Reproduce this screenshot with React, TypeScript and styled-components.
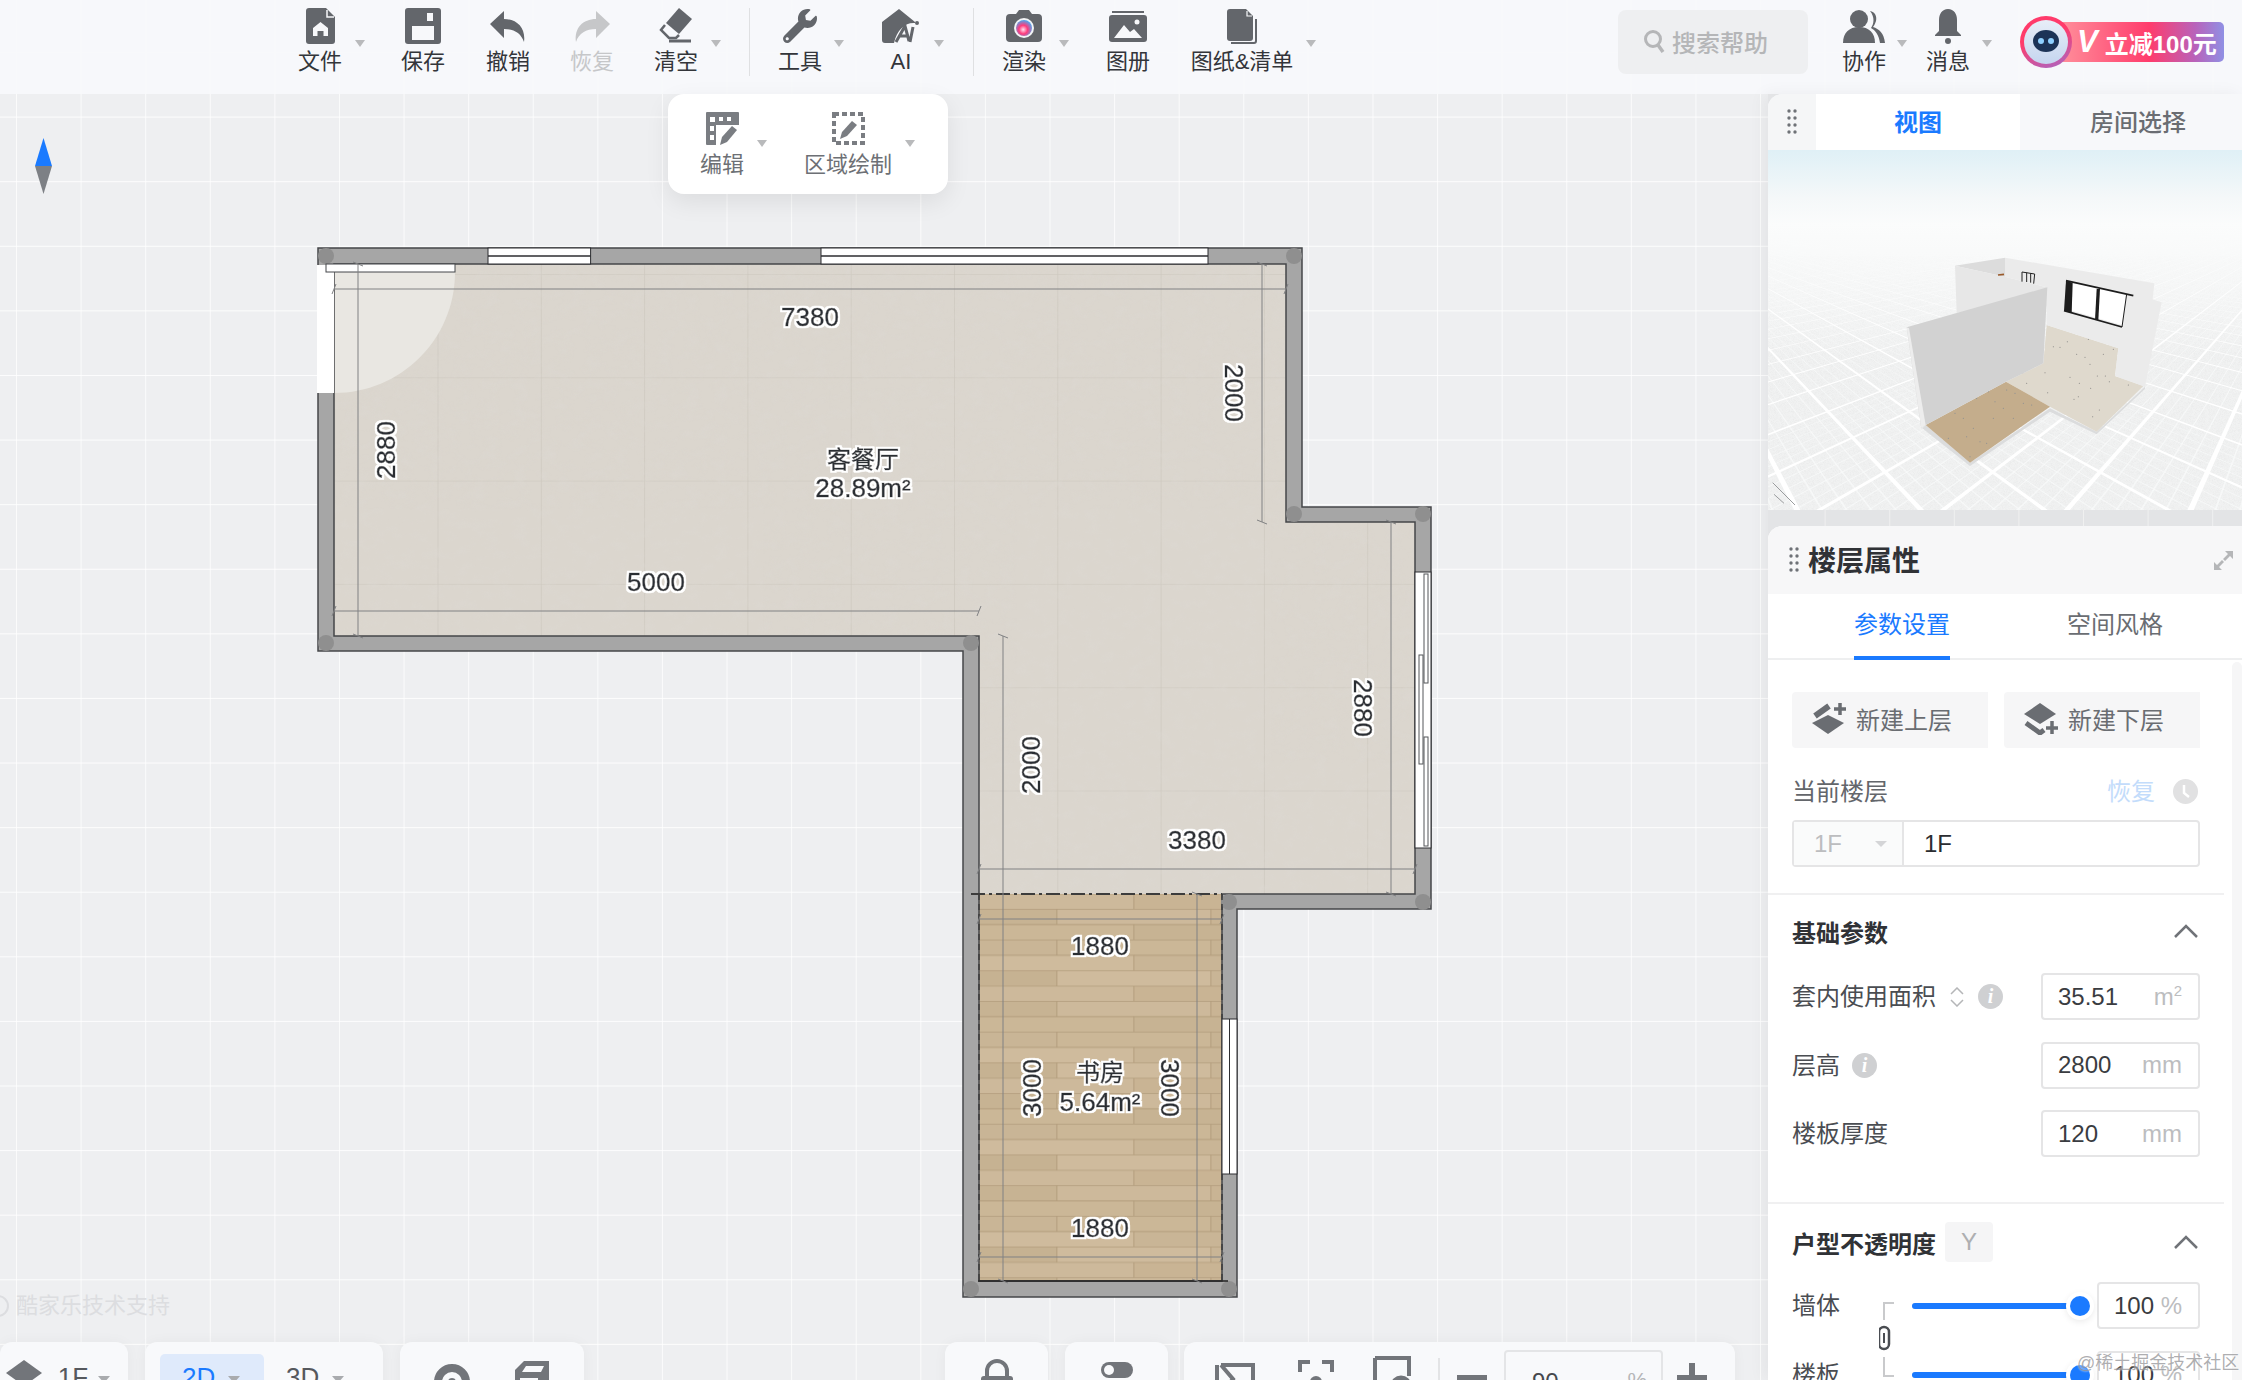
import React from "react";
import styled, { createGlobalStyle } from "styled-components";
import { FaWrench } from "react-icons/fa";

const GlobalStyle = createGlobalStyle`
  html, body { margin: 0; padding: 0; background: #eeeff1; }
  body { font-family: "Liberation Sans", "Noto Sans CJK SC", sans-serif; }
  * { box-sizing: border-box; }
`;

const Page = styled.div`
  position: relative;
  width: 2242px;
  height: 1380px;
  overflow: hidden;
  display: flex;
  flex-direction: column;
  background-color: #eeeff1;
  background-image:
    linear-gradient(to right, rgba(255, 255, 255, 0.75) 1px, transparent 1px),
    linear-gradient(to bottom, rgba(255, 255, 255, 0.85) 1px, transparent 1px);
  background-size: 64.6px 64.6px;
  background-position: 16px 52px;
`;

/* ---------- top toolbar ---------- */

const TopBar = styled.header`
  height: 94px;
  flex: none;
  display: flex;
  padding: 0 18px 0 270px;
  background: rgba(248, 249, 251, 0.94);
`;

const ToolItem = styled.div<{ $w: number; $ml?: number; $off?: boolean }>`
  position: relative;
  width: ${(p) => p.$w}px;
  margin-left: ${(p) => p.$ml ?? 0}px;
  flex: none;
  display: flex;
  flex-direction: column;
  align-items: center;
  padding-top: 6px;
  color: ${(p) => (p.$off ? "#c6c7c9" : "#63666b")};
`;

const ToolIcon = styled.div`
  height: 40px;
  display: flex;
  align-items: center;
  justify-content: center;
`;

const ToolLabel = styled.div<{ $off?: boolean }>`
  margin-top: 4px;
  font-size: 22px;
  line-height: 24px;
  white-space: nowrap;
  color: ${(p) => (p.$off ? "#c6c7c9" : "#33353a")};
`;

const Caret = styled.i<{ $dx: number; $y?: number }>`
  position: absolute;
  top: ${(p) => p.$y ?? 40}px;
  left: calc(50% + ${(p) => p.$dx - 5}px);
  border-style: solid;
  border-width: 7px 5px 0;
  border-color: #b9babc transparent transparent;
`;

const ToolSep = styled.div<{ $ml: number }>`
  width: 1px;
  flex: none;
  height: 68px;
  margin: 8px 0 0 ${(p) => p.$ml}px;
  background: #dfe0e2;
`;

const SearchBox = styled.div`
  width: 190px;
  height: 64px;
  margin: 10px 0 0 auto;
  flex: none;
  display: flex;
  align-items: center;
  gap: 7px;
  padding: 0 0 2px 25px;
  border-radius: 8px;
  background: #eeeff1;
  color: #b5b6b8;
  font-size: 24px;
  font-weight: 500;
`;

const Promo = styled.div`
  display: flex;
  align-items: center;
  height: 52px;
  margin: 16px 0 0 30px;
  flex: none;
`;

const Avatar = styled.div`
  position: relative;
  z-index: 1;
  width: 52px;
  height: 52px;
  border-radius: 50%;
  padding: 4px;
  background: linear-gradient(160deg, #ff3b6b 40%, #a569c8);
`;

const AvatarFace = styled.div`
  width: 44px;
  height: 44px;
  border-radius: 50%;
  background: linear-gradient(#e8eef8, #c5d5ef);
  display: flex;
  align-items: center;
  justify-content: center;
`;

const PromoPill = styled.div`
  height: 40px;
  width: 178px;
  margin-left: -26px;
  padding-left: 31px;
  display: flex;
  align-items: center;
  border-radius: 0 5px 5px 0;
  background: linear-gradient(to right, #ff9ca2, #ff3c6c 58%, #b863bb 84%, #9090e4);
  color: #fff;
  font-size: 24px;
  font-weight: 700;
  white-space: nowrap;
`;

const PromoV = styled.span`
  font-size: 31px;
  font-style: italic;
  margin-right: 7px;
`;

/* ---------- main area ---------- */

const Main = styled.main`
  flex: 1;
  min-height: 0;
  display: flex;
`;

const Canvas = styled.section`
  position: relative;
  flex: 1;
`;

const PlanSvg = styled.svg`
  display: block;
  width: 1768px;
  height: 1286px;
`;

const DimText = styled.text<{ $size?: number }>`
  font-size: ${(p) => p.$size ?? 26}px;
  fill: #2b2e34;
  stroke: #2b2e34;
  stroke-width: 0.5px;
  text-anchor: middle;
  dominant-baseline: central;
  filter: url(#halo);
`;

const Compass = styled.svg`
  position: absolute;
  left: 35px;
  top: 44px;
`;

const FloatBar = styled.div`
  position: absolute;
  left: 668px;
  top: 0;
  width: 280px;
  height: 100px;
  border-radius: 16px;
  background: #fff;
  box-shadow: 0 8px 24px rgba(0, 0, 0, 0.08);
  display: flex;
  color: #7a7d82;
`;

const FloatItem = styled.div<{ $w: number }>`
  position: relative;
  width: ${(p) => p.$w}px;
  flex: none;
  display: flex;
  flex-direction: column;
  align-items: center;
  padding-top: 14px;
`;

const FloatLabel = styled.div`
  margin-top: 3px;
  font-size: 22px;
  line-height: 28px;
  white-space: nowrap;
  color: #6d7075;
`;

const Support = styled.div`
  position: absolute;
  left: -13px;
  top: 1198px;
  display: flex;
  align-items: center;
  gap: 7px;
  font-size: 22px;
  line-height: 28px;
  color: #dcdde0;
`;

const SupportDot = styled.span`
  width: 22px;
  height: 22px;
  border: 2px solid #dcdde0;
  border-radius: 50%;
`;

/* ---------- bottom bar ---------- */

const BottomBar = styled.div`
  position: absolute;
  left: 0;
  top: 1248px;
  display: flex;
`;

const BarPanel = styled.div<{ $w: number; $ml?: number }>`
  width: ${(p) => p.$w}px;
  height: 70px;
  margin-left: ${(p) => p.$ml ?? 0}px;
  flex: none;
  display: flex;
  align-items: flex-start;
  border-radius: 12px 12px 0 0;
  background: #f8f9fb;
  box-shadow: 0 0 14px rgba(0, 0, 0, 0.04);
  color: #72757a;
`;

const BarSlot = styled.div<{ $w: number; $top: number }>`
  width: ${(p) => p.$w}px;
  margin-top: ${(p) => p.$top}px;
  flex: none;
  display: flex;
  justify-content: center;
`;

const BarText = styled.span`
  display: inline-flex;
  align-items: flex-start;
  gap: 10px;
  font-size: 26px;
  line-height: 26px;
  color: #55585d;
`;

const ViewTab = styled.div<{ $active?: boolean; $ml?: number }>`
  width: 104px;
  height: 60px;
  margin: 12px 0 0 ${(p) => p.$ml ?? 0}px;
  padding: 10px 0 0 22px;
  flex: none;
  border-radius: 5px 5px 0 0;
  display: flex;
  align-items: flex-start;
  gap: 13px;
  font-size: 26px;
  line-height: 26px;
  color: ${(p) => (p.$active ? "#1a7aff" : "#55585d")};
  background: ${(p) => (p.$active ? "#dfeafb" : "transparent")};
`;

const SmallCaret = styled.i`
  margin-top: 12px;
  border-style: solid;
  border-width: 7px 6px 0;
  border-color: #a9abae transparent transparent;
`;

const FloorCaret = styled.i`
  border-style: solid;
  border-width: 6px 6px 0;
  border-color: #d4d5d7 transparent transparent;
`;

const BarSep = styled.div`
  width: 2px;
  height: 40px;
  margin-top: 16px;
  background: #e3e4e6;
  flex: none;
`;

const ZoomBox = styled.div`
  width: 159px;
  height: 50px;
  margin-top: 8px;
  padding: 16px 14px 0 26px;
  flex: none;
  display: flex;
  justify-content: space-between;
  border: 2px solid #e4e5e7;
  border-radius: 4px;
  font-size: 24px;
  color: #45484d;
`;

const ZoomUnit = styled.span`
  color: #b5b6b8;
  font-size: 22px;
`;

/* ---------- side panels ---------- */

const Sidebar = styled.aside`
  width: 474px;
  flex: none;
  display: flex;
  flex-direction: column;
  gap: 16px;
  background: rgba(0, 0, 0, 0.045);
  box-shadow: -4px 0 16px rgba(0, 0, 0, 0.05);
`;

const ViewPanel = styled.div`
  flex: none;
  border-radius: 14px 0 0 0;
  overflow: hidden;
`;

const ViewTabs = styled.div`
  height: 56px;
  display: flex;
  background: #f7f8fa;
`;

const Handle = styled.div`
  width: 48px;
  flex: none;
  display: flex;
  align-items: center;
  justify-content: center;
  background: #f5f6f7;
`;

const PanelTab = styled.div<{ $active?: boolean; $w?: number }>`
  ${(p) => (p.$w ? `width: ${p.$w}px;` : "flex: 1; padding-left: 14px;")}
  display: flex;
  align-items: center;
  justify-content: center;
  padding-bottom: 3px;
  font-size: 24px;
  font-weight: ${(p) => (p.$active ? 700 : 500)};
  color: ${(p) => (p.$active ? "#1a7aff" : "#6a6d72")};
  background: ${(p) => (p.$active ? "#fff" : "transparent")};
`;

const PreviewSvg = styled.svg`
  display: block;
  width: 474px;
  height: 360px;
`;

const PropsPanel = styled.div`
  position: relative;
  flex: 1;
  min-height: 0;
  border-radius: 14px 0 0 0;
  background: #fff;
  overflow: hidden;
`;

const PropsHeader = styled.div`
  height: 68px;
  display: flex;
  align-items: center;
  padding: 0 9px 0 21px;
  background: #f7f7f8;
`;

const PropsTitle = styled.h2`
  margin: 0 auto 2px 9px;
  font-size: 28px;
  font-weight: 700;
  color: #303236;
`;

const SubTabs = styled.div`
  height: 66px;
  display: flex;
  border-bottom: 2px solid #eeeff0;
`;

const SubTab = styled.div<{ $active?: boolean; $ml: number }>`
  width: 96px;
  height: 66px;
  margin-left: ${(p) => p.$ml}px;
  padding-top: 14px;
  font-size: 24px;
  line-height: 34px;
  white-space: nowrap;
  text-align: center;
  color: ${(p) => (p.$active ? "#1a7aff" : "#6a6d72")};
  border-bottom: 4px solid ${(p) => (p.$active ? "#1a7aff" : "transparent")};
`;

const ScrollTrack = styled.div`
  position: absolute;
  right: 0;
  top: 136px;
  bottom: 0;
  width: 10px;
  border-radius: 5px 5px 0 0;
  background: #f6f6f7;
`;

const Section = styled.div<{ $pt: number; $pb: number }>`
  padding: ${(p) => p.$pt}px 42px ${(p) => p.$pb}px 24px;
`;

const Divider = styled.div`
  height: 2px;
  margin-right: 18px;
  background: #f0f0f1;
`;

const LayerButtons = styled.div`
  display: flex;
  gap: 16px;
`;

const LayerButton = styled.div`
  width: 196px;
  height: 56px;
  padding: 0 0 3px 19px;
  display: flex;
  align-items: center;
  gap: 9px;
  border-radius: 4px 0 0 4px;
  background: #f6f6f7;
  font-size: 24px;
  color: #6a6d72;
`;

const FloorHead = styled.div`
  height: 28px;
  margin-top: 27px;
  display: flex;
  align-items: center;
  font-size: 24px;
  color: #63666b;
`;

const RestoreLink = styled.span`
  margin-left: auto;
  color: #c3dcfb;
`;

const ClockDot = styled.svg`
  margin: 5px 2px 0 18px;
`;

const FloorInput = styled.div`
  height: 47px;
  margin-top: 17px;
  display: flex;
  border: 2px solid #e5e5e6;
  border-radius: 4px;
  font-size: 24px;
`;

const FloorSelect = styled.div`
  width: 110px;
  flex: none;
  padding-left: 20px;
  display: flex;
  align-items: center;
  gap: 33px;
  color: #bcbdbf;
  background: #fafbfb;
  border-right: 2px solid #e5e5e6;
`;

const FloorValue = styled.div`
  padding-left: 20px;
  display: flex;
  align-items: center;
  color: #2b2d31;
`;

const SectionHead = styled.div<{ $h: number }>`
  height: ${(p) => p.$h}px;
  display: flex;
  align-items: center;
  font-size: 24px;
  font-weight: 700;
  color: #303236;
`;

const Chevron = styled.svg`
  margin: 0 2px 0 auto;
`;

const YBadge = styled.span`
  width: 48px;
  height: 40px;
  margin-left: 9px;
  display: flex;
  align-items: center;
  justify-content: center;
  border-radius: 4px;
  background: #f5f5f6;
  font-size: 24px;
  font-weight: 400;
  color: #aeafb1;
`;

const ParamRows = styled.div`
  margin-top: 27px;
  display: flex;
  flex-direction: column;
  gap: 21.5px;
`;

const ParamRow = styled.div`
  display: flex;
  align-items: center;
  font-size: 24px;
  color: #4a4d52;
`;

const RowName = styled.span`
  margin-bottom: 4px;
`;

const InfoDot = styled.span<{ $ml: number }>`
  width: 25px;
  height: 25px;
  margin-left: ${(p) => p.$ml}px;
  display: flex;
  align-items: center;
  justify-content: center;
  border-radius: 50%;
  background: #cfd0d2;
  color: #fff;
  font-family: "Liberation Serif", serif;
  font-size: 20px;
  font-style: italic;
  font-weight: 700;
`;

const ValueBox = styled.div<{ $w: number; $pl?: number }>`
  width: ${(p) => p.$w}px;
  height: 47px;
  margin-left: auto;
  padding: 0 16px 0 ${(p) => p.$pl ?? 15}px;
  flex: none;
  display: flex;
  align-items: center;
  justify-content: space-between;
  border: 2px solid #e5e5e6;
  border-radius: 4px;
  font-size: 24px;
  color: #3a3c41;
  background: #fff;
`;

const Unit = styled.span`
  font-size: 24px;
  color: #bcbdbf;
`;

const UnitSup = styled.sup`
  font-size: 15px;
  line-height: 0;
`;

const SliderGroup = styled.div`
  position: relative;
  margin-top: 20px;
  display: flex;
  flex-direction: column;
  gap: 22px;
`;

const SliderRow = styled.div`
  display: flex;
  align-items: center;
  font-size: 24px;
  color: #4a4d52;
`;

const SliderLabel = styled.div`
  width: 120px;
  flex: none;
  margin-bottom: 4px;
`;

const SliderTrack = styled.div`
  position: relative;
  width: 168px;
  height: 6px;
  flex: none;
  border-radius: 3px;
  background: #e5e5e6;
`;

const SliderFill = styled.div`
  height: 100%;
  border-radius: 3px;
  background: #1a7aff;
`;

const SliderThumb = styled.div<{ $value: number }>`
  position: absolute;
  top: 50%;
  left: ${(p) => p.$value}%;
  width: 20px;
  height: 20px;
  transform: translate(-50%, -50%);
  border-radius: 50%;
  background: #1a7aff;
  box-shadow: 0 0 0 4px #fff, 0 2px 6px 4px rgba(0, 0, 0, 0.08);
`;

const LinkMark = styled.svg`
  position: absolute;
  left: 87px;
  top: 20px;
`;

const Watermark = styled.div`
  position: absolute;
  left: 2077px;
  top: 1351px;
  font-size: 18px;
  line-height: 24px;
  white-space: nowrap;
  color: rgba(120, 120, 124, 0.6);
  text-shadow: 0 0 2px #fff;
`;

/* ---------- icons ---------- */

const Ink = "currentColor";

const FileIcon = () => (
  <svg width="29" height="36" viewBox="0 0 29 36">
    <path d="M3 0H20L29 9V33a3 3 0 0 1-3 3H3a3 3 0 0 1-3-3V3a3 3 0 0 1 3-3z" fill={Ink} />
    <path d="M21 2v7h7" fill="none" stroke="#f7f8fa" strokeWidth="1.5" />
    <path d="M14.5 14 22 20v8h-4.500v-5h-6v5H7v-8z" fill="#f7f8fa" />
  </svg>
);

const SaveIcon = () => (
  <svg width="36" height="36" viewBox="0 0 36 36">
    <path d="M3 0H33a3 3 0 0 1 3 3V33a3 3 0 0 1-3 3H3a3 3 0 0 1-3-3V3a3 3 0 0 1 3-3z" fill={Ink} />
    <rect x="7" y="18" width="22" height="14" fill="#f7f8fa" />
    <rect x="22" y="5" width="6" height="8" fill="#f7f8fa" />
  </svg>
);

const ReplyIcon = ({ flip }: { flip?: boolean }) => (
  <svg width="36" height="31" viewBox="0 0 36 31" style={flip ? { transform: "scaleX(-1)" } : undefined}>
    <path d="M14 0 0 13l14 14v-9c10 0 17 4 20 13 2-14-7-23-20-23z" fill={Ink} />
  </svg>
);

const EraserIcon = () => (
  <svg width="34" height="36" viewBox="0 0 34 36">
    <path d="M20 0 33 11 20 26 7 15z" fill={Ink} />
    <path d="M6 17 2 22l8 8h7l3-3" fill="none" stroke={Ink} strokeWidth="2.500" />
    <path d="M10 33H32" stroke={Ink} strokeWidth="3" />
  </svg>
);

const AiIcon = () => (
  <svg width="38" height="34" viewBox="0 0 38 34">
    <path d="M17 0 33 13v1C24 13 15 20 12 34H3a3 3 0 0 1-3-3V13z" fill={Ink} />
    <path d="M14 33 23 17l4 15M31 18l-3 15M27 27H18" fill="none" stroke={Ink} strokeWidth="3" />
    <circle cx="35" cy="14" r="2" fill={Ink} />
  </svg>
);

const CameraIcon = () => (
  <svg width="36" height="32" viewBox="0 0 36 32">
    <defs>
      <radialGradient id="lens" cx="45%" cy="60%" r="60%">
        <stop offset="0" stopColor="#ffe0f0" />
        <stop offset="0.45" stopColor="#ff3b7b" />
        <stop offset="1" stopColor="#4aa8f0" />
      </radialGradient>
    </defs>
    <path d="M4 4H10L13 0H23L26 4H32a4 4 0 0 1 4 4V28a4 4 0 0 1-4 4H4a4 4 0 0 1-4-4V8a4 4 0 0 1 4-4z" fill={Ink} />
    <circle cx="18" cy="18" r="10" fill="#f3f4f6" />
    <circle cx="18" cy="18" r="8" fill="url(#lens)" />
  </svg>
);

const AlbumIcon = () => (
  <svg width="38" height="31" viewBox="0 0 38 31">
    <rect x="3" y="0" width="32" height="2" fill={Ink} />
    <rect x="0" y="4" width="38" height="27" rx="3" fill={Ink} />
    <path d="M5 27 15 14l6 7 4-3 8 9z" fill="#f7f8fa" />
    <circle cx="28" cy="11" r="2.500" fill="#f7f8fa" />
  </svg>
);

const DrawingIcon = () => (
  <svg width="30" height="35" viewBox="0 0 30 35">
    <path d="M3 0H19L26 7V29a3 3 0 0 1-3 3H3a3 3 0 0 1-3-3V3a3 3 0 0 1 3-3z" fill={Ink} />
    <path d="M4 34H27a2 2 0 0 0 2-2V10" fill="none" stroke={Ink} strokeWidth="2" />
    <path d="M20 2v5h5" fill="none" stroke="#f7f8fa" strokeWidth="1.200" />
  </svg>
);

const TeamIcon = () => (
  <svg width="42" height="33" viewBox="0 0 42 33">
    <path d="M27 1c5 1 7 5 6 10-1 3-2 5-3 6 6 2 11 6 12 16h-5c-1-8-5-13-9-15 3-4 4-11-1-17z" fill={Ink} />
    <circle cx="16" cy="9" r="9" fill={Ink} />
    <path d="M0 33c0-10 6-16 16-16s16 6 16 16z" fill={Ink} />
  </svg>
);

const BellIcon = () => (
  <svg width="30" height="35" viewBox="0 0 30 35">
    <path d="M15 0c6 0 9 5 9 11v11l4 4v1H2v-1l4-4V11C6 5 9 0 15 0z" fill={Ink} />
    <circle cx="15" cy="32" r="3" fill={Ink} />
  </svg>
);

const EditIcon = () => (
  <svg width="33" height="33" viewBox="0 0 33 33">
    <rect width="33" height="33" rx="1" fill={Ink} />
    <path d="M4 10H9V5H4zM13 9h4V5h-4zM21 9h4V5h-4zM10 13H33V33H10z" fill="#fff" />
    <path d="M4 14h4v5H4zM4 23h4v5H4z" fill="#fff" />
    <path d="M14 33 16 25 26 14l5 4-10 12z" fill={Ink} />
  </svg>
);

const AreaIcon = () => (
  <svg width="33" height="33" viewBox="0 0 33 33">
    <rect x="2" y="2" width="29" height="29" fill="none" stroke={Ink} strokeWidth="4" strokeDasharray="5 3" />
    <path d="M8 27 10 20 20 9l5 4-10 11z" fill={Ink} />
  </svg>
);

const LayerUpIcon = () => (
  <svg width="36" height="32" viewBox="0 0 36 32">
    <path d="M1 20 17 12l16 8-16 11z" fill={Ink} />
    <path d="M4 13 18 3" fill="none" stroke={Ink} strokeWidth="6" />
    <path d="M29 0v12M23 6h12" stroke={Ink} strokeWidth="3.500" />
  </svg>
);

const LayerDownIcon = () => (
  <svg width="36" height="32" viewBox="0 0 36 32">
    <path d="M1 11 17 0l16 11-16 10z" fill={Ink} />
    <path d="M3 20l14 10 4-3" fill="none" stroke={Ink} strokeWidth="5" />
    <path d="M29 18v13M23 25h12" stroke={Ink} strokeWidth="3.500" />
  </svg>
);

const GripDots = ({ rows = 4 }: { rows?: number }) => (
  <svg width="10" height={rows * 7} viewBox={`0 0 10 ${rows * 7}`}>
    {Array.from({ length: rows }).map((_, i) => (
      <g key={i} fill="#6f7277">
        <circle cx="2" cy={3 + i * 7} r="1.700" />
        <circle cx="8" cy={3 + i * 7} r="1.700" />
      </g>
    ))}
  </svg>
);

const ChevronUp = () => (
  <Chevron width="24" height="14" viewBox="0 0 24 14">
    <path d="M1 13 12 2l11 11" fill="none" stroke="#707378" strokeWidth="2.500" />
  </Chevron>
);

const ExpandIcon = () => (
  <svg width="19" height="19" viewBox="0 0 19 19">
    <path d="M11 0h8v8L16 5 11 10 9 8l5-5zM0 19v-8l3 3 5-5 2 2-5 5 3 3z" fill="#b5b6b8" />
  </svg>
);

/* ---------- floor plan ---------- */

const outerWall = "M318 248H1302V507H1431V909H1237V1297H963V651H318Z";
const innerRoom = "M334 264H1286V522H1415V894H1222V1281H979V636H334Z";
const livingRoom = "M334 264H1286V522H1415V894H979V636H334Z";
const studyRoom = "M979 894H1222V1281H979Z";

const corners: [number, number][] = [
  [326, 256], [1294, 256], [326, 643], [971, 643], [1294, 514], [1423, 514],
  [1229, 902], [1423, 902], [971, 1289], [1229, 1289],
];

const hDims: [number, number, number][] = [
  [289, 334, 1286], [611, 334, 979], [869, 979, 1415], [919, 979, 1222], [1257, 979, 1222],
];
const vDims: [number, number, number][] = [
  [358, 264, 636], [1262, 264, 522], [1003, 636, 1281], [1391, 522, 894], [1197, 894, 1281],
];

const dimLabels: { text: string; x: number; y: number; rot?: number }[] = [
  { text: "7380", x: 810, y: 317 },
  { text: "5000", x: 656, y: 582 },
  { text: "3380", x: 1197, y: 840 },
  { text: "1880", x: 1100, y: 946 },
  { text: "1880", x: 1100, y: 1228 },
  { text: "2880", x: 386, y: 450, rot: -90 },
  { text: "2000", x: 1234, y: 393, rot: 90 },
  { text: "2000", x: 1031, y: 765, rot: -90 },
  { text: "2880", x: 1363, y: 708, rot: 90 },
  { text: "3000", x: 1032, y: 1088, rot: -90 },
  { text: "3000", x: 1170, y: 1088, rot: 90 },
];

const woodTints = ["#cdb99b", "#c9b596", "#ccb899", "#c7b393", "#cfbb9d", "#c9b494", "#cbb797", "#c6b292"];

const WoodPattern = () => (
  <pattern id="wood" patternUnits="userSpaceOnUse" x="979" y="894" width="308" height="92.100">
    {Array.from({ length: 6 }).map((_, r) => {
      const y = r * 15.35;
      const joints = r % 2 === 0 ? [0, 155, 308] : [0, 78, 232, 308];
      return joints.slice(0, -1).map((x, i) => (
        <rect
          key={`${r}-${i}`}
          x={x}
          y={y}
          width={joints[i + 1] - x}
          height="15.350"
          fill={woodTints[(r * 3 + i * 5) % woodTints.length]}
          stroke="#b29c7b"
          strokeWidth="0.700"
        />
      ));
    })}
  </pattern>
);

const FloorPlan = () => (
  <PlanSvg viewBox="0 94 1768 1286">
    <defs>
      <pattern id="tile" patternUnits="userSpaceOnUse" x="334.200" y="274" width="103.300" height="103.300">
        <rect width="103.300" height="103.300" fill="#dbd6ce" />
        <path d="M0 0H103.300M0 0V103.300" stroke="#cbc6bd" strokeWidth="1.200" fill="none" />
      </pattern>
      <WoodPattern />
      <filter id="grain" x="0" y="0" width="100%" height="100%">
        <feTurbulence type="fractalNoise" baseFrequency="0.07 0.1" numOctaves="3" seed="4" />
        <feColorMatrix values="0 0 0 0 0.72  0 0 0 0 0.69  0 0 0 0 0.65  2.200 0 0 0 -0.950" />
      </filter>
      <filter id="halo" x="-15%" y="-25%" width="130%" height="150%">
        <feMorphology in="SourceAlpha" operator="dilate" radius="2" result="fat" />
        <feFlood floodColor="#fff" />
        <feComposite in2="fat" operator="in" result="outline" />
        <feMerge>
          <feMergeNode in="outline" />
          <feMergeNode in="SourceGraphic" />
        </feMerge>
      </filter>
      <clipPath id="living">
        <path d={livingRoom} />
      </clipPath>
    </defs>

    <path d={livingRoom} fill="url(#tile)" />
    <g clipPath="url(#living)">
      <rect x="334" y="264" width="1081" height="630" filter="url(#grain)" opacity="0.45" />
    </g>
    <path d={studyRoom} fill="url(#wood)" />

    {/* door swing */}
    <path d="M334 272H455C455 340 400 393 334 393Z" fill="#e9e7e2" />

    <path d={outerWall + " " + innerRoom} fillRule="evenodd" fill="#a6a6a6" stroke="#45474a" strokeWidth="1.500" />
    {corners.map(([x, y]) => (
      <circle key={`${x}-${y}`} cx={x} cy={y} r="8" fill="#8f8f8f" />
    ))}

    {/* door */}
    <rect x="317" y="265" width="17" height="128" fill="#fff" />
    <rect x="326" y="264" width="129" height="8" fill="#fff" stroke="#45474a" strokeWidth="1" />

    {/* windows */}
    {[[488, 590.6], [821, 1208]].map(([a, b]) => (
      <g key={a} stroke="#2c2d30" fill="#fff">
        <rect x={a} y="248" width={b - a} height="16" strokeWidth="1" />
        <path d={`M${a} 256H${b}`} strokeWidth="1.500" />
      </g>
    ))}
    <rect x="1415" y="572" width="16" height="276" fill="#fff" stroke="#2c2d30" strokeWidth="1" />
    <g fill="#fff" stroke="#55575a" strokeWidth="1">
      <rect x="1424" y="574" width="4" height="109" />
      <rect x="1419" y="655" width="4" height="109" />
      <rect x="1424" y="737" width="4" height="109" />
    </g>
    <rect x="1222" y="1019" width="15" height="155" fill="#fff" stroke="#2c2d30" strokeWidth="1" />
    <path d="M1229.500 1019V1174" stroke="#2c2d30" strokeWidth="1" />

    {/* room boundary */}
    <path d="M971 894H1222" stroke="#3c3c3c" strokeWidth="2" strokeDasharray="14 4 3 4" />
    <path d="M979 894V1281M1222 894V1019M1222 1174V1281" stroke="#3c3c3c" strokeWidth="1.500" strokeDasharray="6 4" />
    <path d="M978 1281H1228" stroke="#222" strokeWidth="1.500" />

    {/* dimension lines */}
    <g stroke="#808183" strokeWidth="1" fill="none">
      {hDims.map(([y, a, b]) => (
        <path key={`h${y}`} d={`M${a} ${y}H${b}M${a + 2} ${y - 5}l-4 10M${b + 2} ${y - 5}l-4 10`} />
      ))}
      {vDims.map(([x, a, b]) => (
        <path key={`v${x}`} d={`M${x} ${a}V${b}M${x - 5} ${a - 2}l10 4M${x - 5} ${b - 2}l10 4`} />
      ))}
    </g>

    {dimLabels.map((d) => (
      <DimText
        key={`${d.text}-${d.x}`}
        x={d.x}
        y={d.y}
        transform={d.rot ? `rotate(${d.rot} ${d.x} ${d.y})` : undefined}
      >
        {d.text}
      </DimText>
    ))}

    <DimText x="863" y="459" $size={24}>客餐厅</DimText>
    <DimText x="863" y="488" $size={26}>28.89m²</DimText>
    <DimText x="1100" y="1072" $size={24}>书房</DimText>
    <DimText x="1100" y="1102" $size={26}>5.64m²</DimText>
  </PlanSvg>
);

/* ---------- 3D preview, drawn in its own 1422x1080 space ---------- */

const wedges = (vx: number, s: number, w: number) =>
  Array.from({ length: 41 }).map((_, k) => {
    const x = 710 + (k - 20) * s;
    return `${vx},400 ${x - w},1500 ${x + w},1500`;
  });

const stoneDots = [
  [880, 770], [900, 772], [922, 755], [985, 748], [950, 793], [975, 802], [1030, 793], [1060, 778], [990, 823],
  [855, 848], [930, 862], [1012, 858], [1036, 858], [1048, 875], [1105, 885], [800, 880], [958, 880], [992, 895],
  [863, 908], [955, 920], [942, 928], [1018, 960], [998, 980], [832, 822], [788, 848],
];
const woodDots = [
  [740, 900], [765, 910], [705, 935], [685, 905], [650, 925], [730, 955], [790, 940], [815, 945], [585, 970],
  [610, 985], [640, 1015], [700, 985], [760, 985], [565, 1045], [620, 1040], [660, 1055], [630, 1100], [680, 1060],
];

const Preview = () => (
  <PreviewSvg viewBox="24 180 1422 1080">
    <defs>
      <linearGradient id="sky" x1="0" y1="0" x2="0" y2="1">
        <stop offset="0" stopColor="#dff0f6" />
        <stop offset="0.65" stopColor="#f5f8f9" />
        <stop offset="1" stopColor="#fbfcfc" />
      </linearGradient>
      <linearGradient id="haze" x1="0" y1="0" x2="0" y2="1">
        <stop offset="0" stopColor="#fbfcfc" stopOpacity="1" />
        <stop offset="1" stopColor="#fbfcfc" stopOpacity="0" />
      </linearGradient>
      <filter id="groundNoise" x="0" y="0" width="100%" height="100%">
        <feTurbulence type="fractalNoise" baseFrequency="0.7" numOctaves="2" seed="8" />
        <feColorMatrix values="0 0 0 0 0.6  0 0 0 0 0.6  0 0 0 0 0.6  0.9 0 0 0 -0.33" />
      </filter>
    </defs>
    <rect x="24" y="180" width="1422" height="1080" fill="#f1f2f2" />
    <rect x="24" y="500" width="1422" height="760" filter="url(#groundNoise)" opacity="0.4" />
    {wedges(-330, 95, 4).map((p) => <polygon key={p} points={p} fill="#fafbfb" opacity="0.7" />)}
    {wedges(1674, 95, 4).map((p) => <polygon key={p} points={p} fill="#fafbfb" opacity="0.7" />)}
    {wedges(-330, 475, 12).map((p) => <polygon key={p} points={p} fill="#fff" />)}
    {wedges(1674, 475, 12).map((p) => <polygon key={p} points={p} fill="#fff" />)}
    <rect x="24" y="400" width="1422" height="400" fill="url(#haze)" />
    <rect x="24" y="180" width="1422" height="225" fill="url(#sky)" />

    {/* slab edges */}
    <path d="M497 1005 630 1118 870 955 1010 1025 1155 890V897L1010 1033 870 965 630 1128 487 1015Z" fill="#dbdcdd" />

    {/* floors */}
    <path d="M860 705 1075 775 1065 858 1150 888 1010 1025 870 950 738 875 850 820Z" fill="#dfd9cd" />
    <path d="M738 875 870 950 630 1118 497 1005Z" fill="#c4ad8c" />
    {stoneDots.map(([x, y]) => <circle key={`${x}-${y}`} cx={x} cy={y} r="1.500" fill="#777" />)}
    {woodDots.map(([x, y]) => <circle key={`${x}-${y}`} cx={x} cy={y} r="1.500" fill="#7b8794" />)}

    {/* walls */}
    <path d="M585 527 735 503V560Z" fill="#dcdcdc" />
    <path d="M585 527 735 560 860 592V650L590 668Z" fill="#e7e7e7" />
    <path d="M735 503 1183 580 1178 628 1205 637 1155 890 1065 858 1075 775 860 705V592L735 560Z" fill="#ebebeb" />
    <path d="M440 712 862 592 850 820 738 875 497 1005 484 1015Z" fill="#d2d2d2" />
    <path d="M440 712 447 715 497 1005 484 1015Z" fill="#ededed" />

    {/* window */}
    <path d="M938 578 1100 612 1085 705 935 662Z" fill="#fff" />
    <path d="M918 572 1120 617M912 662 1086 711" stroke="#1d1d1d" strokeWidth="5" fill="none" />
    <path d="M918 572 938 578 935 668 912 662Z" fill="#1d1d1d" />
    <path d="M1015 597 1010 690" stroke="#1d1d1d" strokeWidth="10" />
    <path d="M1100 612 1086 711" stroke="#1d1d1d" strokeWidth="3" />

    {/* door */}
    <path d="M786 575V546L824 552 821 581M800 548V576M812 550V578" fill="none" stroke="#232323" strokeWidth="3" />
    <path d="M714 555 732 553" stroke="#9a5a2b" strokeWidth="5" />

    <path d="M38 1178 105 1245M42 1213 72 1240" stroke="#9a9c9e" strokeWidth="3" />
  </PreviewSvg>
);

const tools = {
  first: [
    { w: 100, label: "文件", icon: <FileIcon />, caret: 40 },
    { w: 106, label: "保存", icon: <SaveIcon /> },
    { w: 64, label: "撤销", icon: <ReplyIcon /> },
    { w: 104, label: "恢复", icon: <ReplyIcon flip />, off: true },
    { w: 64, label: "清空", icon: <EraserIcon />, caret: 40 },
  ],
  second: [
    { w: 100, label: "工具", icon: <FaWrench size={34} />, caret: 39 },
    { w: 102, label: "AI", icon: <AiIcon />, caret: 38 },
  ],
  third: [
    { w: 100, label: "渲染", icon: <CameraIcon />, caret: 40 },
    { w: 108, label: "图册", icon: <AlbumIcon /> },
    { w: 120, label: "图纸&清单", icon: <DrawingIcon />, caret: 69 },
  ],
};

type Tool = { w: number; label: string; icon: React.ReactNode; caret?: number; off?: boolean };

const ToolGroup = ({ items }: { items: Tool[] }) => (
  <>
    {items.map((t) => (
      <ToolItem key={t.label} $w={t.w} $off={t.off}>
        <ToolIcon>{t.icon}</ToolIcon>
        <ToolLabel $off={t.off}>{t.label}</ToolLabel>
        {t.caret && <Caret $dx={t.caret} />}
      </ToolItem>
    ))}
  </>
);

const params = [
  { label: "套内使用面积", value: "35.51", unit: "m", sup: true, sort: true },
  { label: "层高", value: "2800", unit: "mm", info: 12 },
  { label: "楼板厚度", value: "120", unit: "mm" },
];

const App = () => (
  <Page>
    <GlobalStyle />
    <TopBar>
      <ToolGroup items={tools.first} />
      <ToolSep $ml={41} />
      <ToolGroup items={tools.second} />
      <ToolSep $ml={21} />
      <ToolGroup items={tools.third} />

      <SearchBox>
        <svg width="22" height="24" viewBox="0 0 22 24">
          <circle cx="10" cy="10" r="7.500" fill="none" stroke="#b5b6b8" strokeWidth="3" />
          <path d="M15 16l5 7" stroke="#b5b6b8" strokeWidth="3.500" />
        </svg>
        搜索帮助
      </SearchBox>
      <ToolItem $w={84} $ml={14}>
        <ToolIcon><TeamIcon /></ToolIcon>
        <ToolLabel>协作</ToolLabel>
        <Caret $dx={38} />
      </ToolItem>
      <ToolItem $w={84}>
        <ToolIcon><BellIcon /></ToolIcon>
        <ToolLabel>消息</ToolLabel>
        <Caret $dx={39} />
      </ToolItem>
      <Promo>
        <Avatar>
          <AvatarFace>
            <svg width="30" height="26" viewBox="0 0 30 26">
              <ellipse cx="15" cy="12" rx="13" ry="11" fill="#1c3357" />
              <circle cx="10" cy="12" r="3" fill="#8fd0ff" />
              <circle cx="20" cy="12" r="3" fill="#8fd0ff" />
            </svg>
          </AvatarFace>
        </Avatar>
        <PromoPill>
          <PromoV>V</PromoV>
          立减100元
        </PromoPill>
      </Promo>
    </TopBar>

    <Main>
      <Canvas>
        <FloorPlan />

        <Compass width="17" height="56" viewBox="0 0 17 56">
          <path d="M8.500 0 17 28H0Z" fill="#1a7aff" />
          <path d="M0 28H17L8.500 56Z" fill="#7d8085" />
        </Compass>

        <FloatBar>
          <FloatItem $w={108}>
            <ToolIcon><EditIcon /></ToolIcon>
            <FloatLabel>编辑</FloatLabel>
            <Caret $dx={40} $y={46} />
          </FloatItem>
          <FloatItem $w={144}>
            <ToolIcon><AreaIcon /></ToolIcon>
            <FloatLabel>区域绘制</FloatLabel>
            <Caret $dx={62} $y={46} />
          </FloatItem>
        </FloatBar>

        <Support>
          <SupportDot />
          酷家乐技术支持
        </Support>

        <BottomBar>
          <BarPanel $w={128}>
            <BarSlot $w={48} $top={18}>
              <svg width="36" height="40" viewBox="0 0 36 40">
                <path d="M18 0 36 13 18 26 0 13z" fill="#72757a" />
                <path d="M4 24 18 34 32 24" fill="none" stroke="#72757a" strokeWidth="6" />
              </svg>
            </BarSlot>
            <BarSlot $w={72} $top={22}>
              <BarText>1F<SmallCaret /></BarText>
            </BarSlot>
          </BarPanel>
          <BarPanel $w={238} $ml={17}>
            <ViewTab $active $ml={15}>2D<SmallCaret /></ViewTab>
            <ViewTab>3D<SmallCaret /></ViewTab>
          </BarPanel>
          <BarPanel $w={184} $ml={17}>
            <BarSlot $w={104} $top={22}>
              <svg width="36" height="36" viewBox="0 0 36 36">
                <circle cx="18" cy="18" r="14" fill="none" stroke="#72757a" strokeWidth="8" />
                <circle cx="18" cy="18" r="4" fill="#72757a" />
              </svg>
            </BarSlot>
            <BarSlot $w={56} $top={18}>
              <svg width="36" height="40" viewBox="0 0 36 40">
                <path d="M10 1H35V40H1V10z" fill="#72757a" />
                <path d="M12 6H30L27 12H8zM6 18H24V34H6z" fill="#f8f9fb" />
              </svg>
            </BarSlot>
          </BarPanel>
          <BarPanel $w={103} $ml={361}>
            <BarSlot $w={103} $top={16}>
              <svg width="32" height="36" viewBox="0 0 32 36">
                <path d="M6 18V13a10 10 0 0 1 20 0v5" fill="none" stroke="#72757a" strokeWidth="4" />
                <rect y="18" width="32" height="18" rx="3" fill="#72757a" />
              </svg>
            </BarSlot>
          </BarPanel>
          <BarPanel $w={103} $ml={17}>
            <BarSlot $w={103} $top={20}>
              <svg width="32" height="16" viewBox="0 0 32 16">
                <rect width="32" height="16" rx="8" fill="#72757a" />
                <circle cx="8" cy="8" r="5" fill="#f8f9fb" />
              </svg>
            </BarSlot>
          </BarPanel>
          <BarPanel $w={551} $ml={16}>
            <BarSlot $w={102} $top={21}>
              <svg width="40" height="30" viewBox="0 0 40 30">
                <path d="M6 2H38V22M2 2V30M6 2 18 16 6 30" fill="none" stroke="#72757a" strokeWidth="4" />
                <circle cx="28" cy="24" r="6" fill="#72757a" />
              </svg>
            </BarSlot>
            <BarSlot $w={60} $top={18}>
              <svg width="36" height="30" viewBox="0 0 36 30">
                <path d="M2 12V2H12M24 2H34V12" fill="none" stroke="#72757a" strokeWidth="4" />
                <circle cx="18" cy="22" r="6" fill="#72757a" />
              </svg>
            </BarSlot>
            <BarSlot $w={92} $top={14}>
              <svg width="38" height="36" viewBox="0 0 38 36">
                <path d="M2 2H36V20M2 2V36" fill="none" stroke="#72757a" strokeWidth="4" />
                <circle cx="28" cy="30" r="8" fill="none" stroke="#72757a" strokeWidth="5" />
              </svg>
            </BarSlot>
            <BarSep />
            <BarSlot $w={64} $top={33}>
              <svg width="30" height="6" viewBox="0 0 30 6">
                <rect width="30" height="6" fill="#72757a" />
              </svg>
            </BarSlot>
            <ZoomBox>
              90
              <ZoomUnit>%</ZoomUnit>
            </ZoomBox>
            <BarSlot $w={58} $top={21}>
              <svg width="30" height="30" viewBox="0 0 30 30">
                <path d="M15 0V30M0 15H30" stroke="#72757a" strokeWidth="6" />
              </svg>
            </BarSlot>
          </BarPanel>
        </BottomBar>
      </Canvas>

      <Sidebar>
        <ViewPanel>
          <ViewTabs>
            <Handle><GripDots /></Handle>
            <PanelTab $active $w={204}>视图</PanelTab>
            <PanelTab>房间选择</PanelTab>
          </ViewTabs>
          <Preview />
        </ViewPanel>

        <PropsPanel>
          <PropsHeader>
            <GripDots />
            <PropsTitle>楼层属性</PropsTitle>
            <ExpandIcon />
          </PropsHeader>
          <SubTabs>
            <SubTab $active $ml={86}>参数设置</SubTab>
            <SubTab $ml={117}>空间风格</SubTab>
          </SubTabs>
          <ScrollTrack />

          <Section $pt={32} $pb={26}>
            <LayerButtons>
              <LayerButton><LayerUpIcon />新建上层</LayerButton>
              <LayerButton><LayerDownIcon />新建下层</LayerButton>
            </LayerButtons>
            <FloorHead>
              当前楼层
              <RestoreLink>恢复</RestoreLink>
              <ClockDot width="25" height="25" viewBox="0 0 25 25">
                <circle cx="12.500" cy="12.500" r="12.500" fill="#e1e1e2" />
                <path d="M11 6v8l5 4" fill="none" stroke="#fff" strokeWidth="2.500" />
              </ClockDot>
            </FloorHead>
            <FloorInput>
              <FloorSelect>1F<FloorCaret /></FloorSelect>
              <FloorValue>1F</FloorValue>
            </FloorInput>
          </Section>
          <Divider />

          <Section $pt={21} $pb={45}>
            <SectionHead $h={30}>
              基础参数
              <ChevronUp />
            </SectionHead>
            <ParamRows>
              {params.map((p) => (
                <ParamRow key={p.label}>
                  <RowName>{p.label}</RowName>
                  {p.sort && (
                    <>
                      <svg width="14" height="20" viewBox="0 0 14 20" style={{ marginLeft: 14 }}>
                        <path d="M1 7 7 1l6 6M1 13l6 6 6-6" fill="none" stroke="#b5b6b8" strokeWidth="1.500" />
                      </svg>
                      <InfoDot $ml={14}>i</InfoDot>
                    </>
                  )}
                  {p.info && <InfoDot $ml={p.info}>i</InfoDot>}
                  <ValueBox $w={159}>
                    {p.value}
                    <Unit>{p.unit}{p.sup && <UnitSup>2</UnitSup>}</Unit>
                  </ValueBox>
                </ParamRow>
              ))}
            </ParamRows>
          </Section>
          <Divider />

          <Section $pt={18} $pb={0}>
            <SectionHead $h={40}>
              户型不透明度
              <YBadge>Y</YBadge>
              <ChevronUp />
            </SectionHead>
            <SliderGroup>
              <LinkMark width="20" height="96" viewBox="0 0 20 96">
                <path d="M15 1H5V18M15 74H5V55" fill="none" stroke="#c9cacc" strokeWidth="2" />
                <rect x="0" y="25" width="10" height="22" rx="5" fill="none" stroke="#4a4d52" strokeWidth="2.500" />
                <path d="M5 31V41" stroke="#4a4d52" strokeWidth="2" />
              </LinkMark>
              {["墙体", "楼板"].map((name) => (
                <SliderRow key={name}>
                  <SliderLabel>{name}</SliderLabel>
                  <SliderTrack>
                    <SliderFill style={{ width: "100%" }} />
                    <SliderThumb $value={100} />
                  </SliderTrack>
                  <ValueBox $w={103}>
                    100
                    <Unit>%</Unit>
                  </ValueBox>
                </SliderRow>
              ))}
            </SliderGroup>
          </Section>
        </PropsPanel>
      </Sidebar>
    </Main>

    <Watermark>@稀土掘金技术社区</Watermark>
  </Page>
);

export default App;
